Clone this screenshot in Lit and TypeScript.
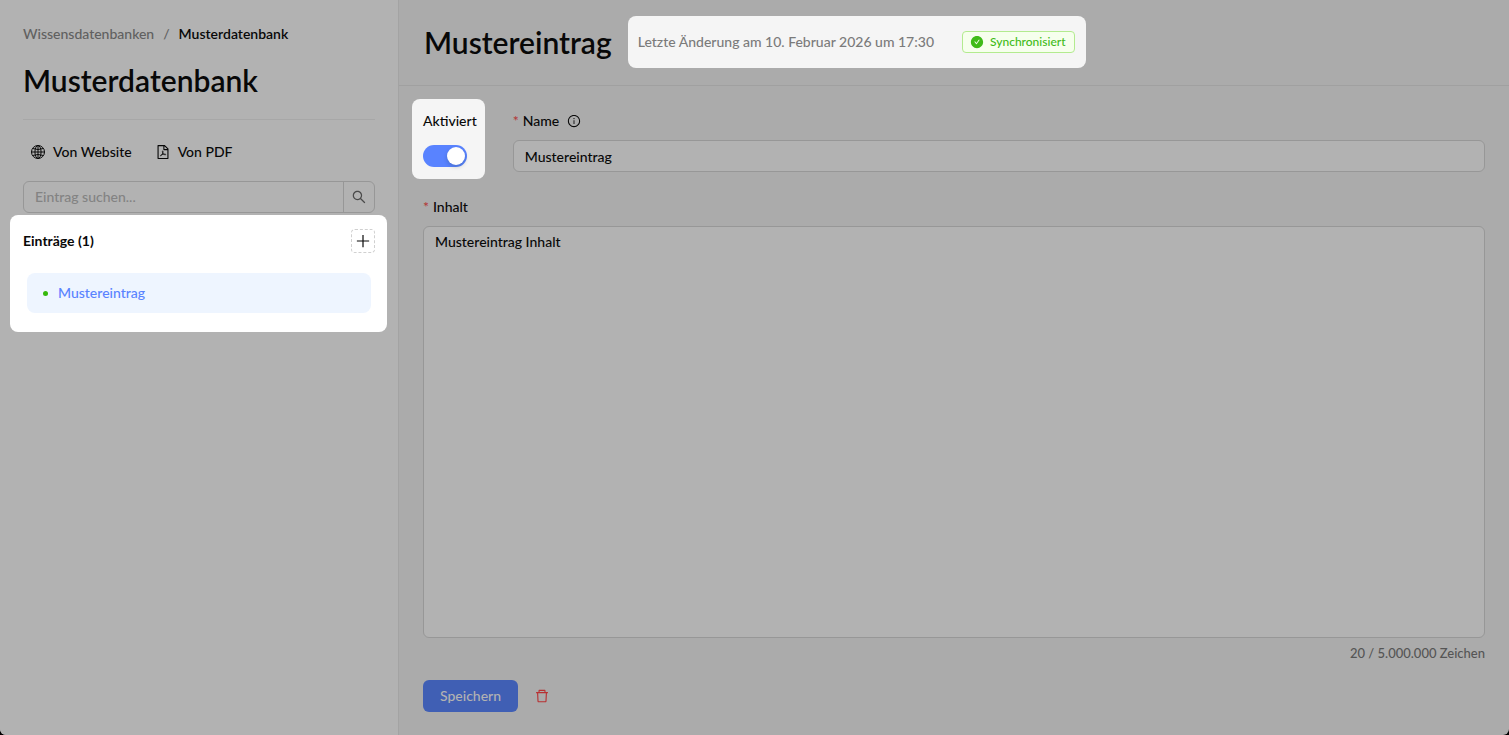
import { LitElement, html, css, svg } from "lit";
import { customElement, state } from "lit/decorators.js";

const icons = {
  globe: svg`<g fill="none" stroke="currentColor" stroke-width="64"><circle cx="512" cy="512" r="416"/><ellipse cx="512" cy="512" rx="196" ry="416"/><path d="M512 96v832M96 512h832M176 290q336 124 672 0M176 734q336-124 672 0"/></g>`,
  pdf: svg`<path d="M854.6 288.6L639.4 73.4c-6-6-14.1-9.4-22.6-9.4H192c-17.7 0-32 14.3-32 32v832c0 17.7 14.3 32 32 32h640c17.7 0 32-14.3 32-32V311.3c0-8.5-3.4-16.7-9.4-22.7zM790.2 326H602V137.8L790.2 326zm1.8 562H232V136h302v216a42 42 0 0042 42h216v494z"/><path fill="none" stroke="currentColor" stroke-width="50" d="M492 440c-26 10-22 84 8 140 32 62 92 110 160 112 34 0 40-34 4-42-92-20-230 20-302 72-26 20-14 46 12 34 62-30 134-164 142-258 2-34-6-62-24-58z"/>`,
  search: svg`<path d="M909.6 854.5L649.9 594.8C690.2 542.7 712 479 712 412c0-80.2-31.3-155.4-87.9-212.1-56.6-56.7-132-87.9-212.1-87.9s-155.5 31.3-212.1 87.9C143.2 256.5 112 331.8 112 412c0 80.1 31.3 155.5 87.9 212.1C256.5 680.8 331.8 712 412 712c67 0 130.6-21.8 182.7-62l259.7 259.6a8.2 8.2 0 0011.6 0l43.6-43.5a8.2 8.2 0 000-11.6zM570.4 570.4C528 612.7 471.8 636 412 636s-116-23.3-158.4-65.6C211.3 528 188 471.8 188 412s23.3-116.1 65.6-158.4C296 211.3 352.2 188 412 188s116.1 23.2 158.4 65.6S636 352.2 636 412s-23.3 116.1-65.6 158.4z"/>`,
  plus: svg`<path d="M474 120h76v354h354v76H550v354h-76V550H120v-76h354z"/>`,
  info: svg`<path d="M512 64C264.6 64 64 264.6 64 512s200.6 448 448 448 448-200.6 448-448S759.4 64 512 64zm0 820c-205.4 0-372-166.6-372-372s166.6-372 372-372 372 166.6 372 372-166.6 372-372 372z"/><path d="M464 336a48 48 0 1096 0 48 48 0 10-96 0zm72 112h-48c-4.4 0-8 3.6-8 8v272c0 4.4 3.6 8 8 8h48c4.4 0 8-3.6 8-8V456c0-4.4-3.6-8-8-8z"/>`,
  check: svg`<path d="M512 64C264.6 64 64 264.6 64 512s200.6 448 448 448 448-200.6 448-448S759.4 64 512 64zm193.5 301.7l-210.6 292a31.8 31.8 0 01-51.7 0L318.5 484.9c-3.8-5.3 0-12.7 6.5-12.7h46.9c10.2 0 19.9 4.9 25.9 13.3l71.2 98.8 157.2-218c6-8.3 15.6-13.3 25.9-13.3H699c6.5 0 10.3 7.4 6.5 12.7z"/>`,
  trash: svg`<path d="M360 184h-8c4.4 0 8-3.6 8-8v8h304v-8c0 4.4 3.6 8 8 8h-8v72h72v-80c0-35.3-28.7-64-64-64H352c-35.3 0-64 28.7-64 64v80h72v-72zm504 72H160c-17.7 0-32 14.3-32 32v32c0 4.4 3.6 8 8 8h60.4l24.7 523c1.6 34.1 29.8 61 63.9 61h454c34.2 0 62.3-26.8 63.9-61l24.7-523H888c4.4 0 8-3.6 8-8v-32c0-17.7-14.3-32-32-32zM731.3 840H292.7l-24.2-512h487l-24.2 512z"/>`,
};

const icon = (name: keyof typeof icons, size = "") =>
  html`<svg class="icon ${size}" viewBox="0 0 1024 1024" fill="currentColor" aria-hidden="true">${icons[name]}</svg>`;

@customElement("app-root")
export class AppRoot extends LitElement {
  @state() private content = "Mustereintrag Inhalt";
  @state() private entries = ["Mustereintrag"];

  static styles = css`
    :host {
      display: block;
      background: #000;
      font: 500 14px/22px Lato, "Liberation Sans", sans-serif;
      color: #080808;
    }
    * { box-sizing: border-box; }
    button, input, textarea { font: inherit; color: inherit; margin: 0; }
    button { cursor: pointer; }
    h1, h2, h3 { margin: 0; font-weight: 600; }
    a { text-decoration: none; }
    .icon { display: block; width: 16px; height: 16px; flex: none; }
    .icon.small { width: 14px; height: 14px; }

    .window {
      display: grid;
      grid-template-columns: 399px minmax(0, 1fr);
      min-height: 100vh;
      border-radius: 0 0 6px 6px;
      overflow: hidden;
      background: #ababab;
    }
    .sidebar {
      padding: 23px;
      background: #b2b2b2;
      border-right: 1px solid #a3a3a3;
    }
    .crumbs { display: flex; gap: 9px; }
    .crumbs a, .crumbs .slash { color: #606060; }
    .crumbs .current { color: #080808; font-weight: 600; }
    .title { font-size: 30px; line-height: 38px; white-space: nowrap; }
    .sidebar .title {
      margin-top: 16px;
      padding-bottom: 20px;
      border-bottom: 1px solid #a7a7a7;
    }
    .sources { display: flex; gap: 8px; margin-top: 16px; }
    .source {
      display: flex;
      align-items: center;
      gap: 7px;
      height: 32px;
      padding: 0 8px 0 7px;
      border: 0;
      background: none;
    }
    .search {
      display: flex;
      height: 32px;
      margin-top: 13px;
      border: 1px solid #979797;
      border-radius: 6px;
    }
    .search input {
      flex: 1;
      min-width: 0;
      padding: 0 11px;
      border: 0;
      background: none;
    }
    .search input::placeholder { color: #838383; opacity: 1; }
    .search button {
      display: grid;
      place-items: center;
      width: 31px;
      padding: 0;
      border: 0;
      border-left: 1px solid #979797;
      background: none;
      color: #4a4a4a;
    }
    .entries {
      margin: 2px -12px 0 -13px;
      padding: 14px 12px 19px 13px;
      border-radius: 8px;
      background: #fff;
    }
    .entries-head { display: flex; align-items: center; justify-content: space-between; }
    .entries h2 { font-size: 14px; font-weight: 700; }
    .add {
      display: grid;
      place-items: center;
      width: 24px;
      height: 24px;
      padding: 0;
      border: 1px dashed #d0d0d0;
      border-radius: 4px;
      background: #fff;
    }
    .entries ul { list-style: none; margin: 20px 4px 0; padding: 0; }
    .entry {
      display: flex;
      align-items: center;
      gap: 10px;
      height: 40px;
      padding: 0 16px;
      border-radius: 8px;
      background: #eef5ff;
      color: #5983ff;
    }
    .dot { width: 5px; height: 5px; border-radius: 50%; background: #35b90c; }

    .main { display: flex; flex-direction: column; }
    .header {
      display: flex;
      align-items: center;
      gap: 16px;
      padding: 16px 25px 17px;
      border-bottom: 1px solid #a0a0a0;
    }
    .meta {
      display: flex;
      align-items: center;
      gap: 28px;
      height: 52px;
      padding: 0 11px 0 10px;
      border-radius: 8px;
      background: #f5f5f5;
      color: #7b7b7b;
      white-space: nowrap;
    }
    .tag {
      display: flex;
      align-items: center;
      gap: 6px;
      padding: 0 8px 0 7px;
      border: 1px solid #b3eb8f;
      border-radius: 4px;
      background: #f6ffed;
      color: #3fbb18;
      font-size: 12px;
      line-height: 20px;
    }
    form {
      flex: 1;
      display: flex;
      flex-direction: column;
      padding: 13px 24px 23px;
    }
    .row { display: flex; gap: 28px; }
    .enabled {
      display: flex;
      flex-direction: column;
      gap: 13px;
      margin-left: -11px;
      padding: 11px 8px 12px 11px;
      border-radius: 8px;
      background: #f5f5f5;
    }
    .switch {
      appearance: none;
      display: flex;
      justify-content: flex-end;
      width: 44px;
      height: 22px;
      margin: 0;
      padding: 2px;
      border-radius: 11px;
      background: #5983ff;
      cursor: pointer;
    }
    .switch::before {
      content: "";
      width: 18px;
      height: 18px;
      border-radius: 50%;
      background: #fff;
      box-shadow: 0 2px 4px #00230b33;
    }
    .switch:not(:checked) { justify-content: flex-start; background: #bfbfbf; }
    .field { flex: 1; display: flex; flex-direction: column; gap: 8px; min-width: 0; }
    .row .field { padding-top: 11px; }
    .label { display: flex; align-items: center; gap: 8px; }
    .required::before { content: "*"; margin-right: 4px; color: #b23536; }
    .control {
      width: 100%;
      padding: 4px 11px;
      border: 1px solid #979797;
      border-radius: 6px;
      background: #b2b2b2;
    }
    input.control { height: 32px; }
    .content { margin-top: 17px; }
    textarea.control { display: block; flex: 1; min-height: 120px; resize: none; }
    .count { margin-top: 4px; text-align: right; font-size: 13px; color: #555; }
    .actions { display: flex; align-items: center; gap: 8px; margin-top: 16px; }
    .save {
      height: 32px;
      padding: 0 17px;
      border: 0;
      border-radius: 6px;
      background: #405fb4;
      color: #b2b2b2;
    }
    .delete {
      display: grid;
      place-items: center;
      width: 32px;
      height: 32px;
      padding: 0;
      border: 0;
      background: none;
      color: #b83032;
    }
  `;

  render() {
    return html`
      <div class="window">
        <aside class="sidebar">
          <nav class="crumbs" aria-label="Brotkrumen">
            <a href="#">Wissensdatenbanken</a>
            <span class="slash">/</span>
            <span class="current">Musterdatenbank</span>
          </nav>
          <h1 class="title">Musterdatenbank</h1>
          <div class="sources">
            <button class="source" type="button">${icon("globe")}Von Website</button>
            <button class="source" type="button">${icon("pdf")}Von PDF</button>
          </div>
          <div class="search" role="search">
            <input type="text" placeholder="Eintrag suchen..." aria-label="Eintrag suchen" />
            <button type="button" aria-label="Suchen">${icon("search")}</button>
          </div>
          <section class="entries">
            <div class="entries-head">
              <h2>Einträge (${this.entries.length})</h2>
              <button class="add" type="button" aria-label="Eintrag hinzufügen">${icon("plus")}</button>
            </div>
            <ul>
              ${this.entries.map((name) => html`<li><a class="entry" href="#"><span class="dot"></span>${name}</a></li>`)}
            </ul>
          </section>
        </aside>
        <main class="main">
          <header class="header">
            <h2 class="title">Mustereintrag</h2>
            <div class="meta">
              <span>Letzte Änderung am 10. Februar 2026 um 17:30</span>
              <span class="tag">${icon("check", "small")}Synchronisiert</span>
            </div>
          </header>
          <form @submit=${(e: Event) => e.preventDefault()}>
            <div class="row">
              <div class="enabled">
                <label for="enabled">Aktiviert</label>
                <input class="switch" id="enabled" type="checkbox" role="switch" checked />
              </div>
              <div class="field">
                <div class="label"><label class="required" for="name">Name</label>${icon("info", "small")}</div>
                <input class="control" id="name" type="text" value="Mustereintrag" />
              </div>
            </div>
            <div class="field content">
              <label class="required" for="content">Inhalt</label>
              <textarea
                class="control"
                id="content"
                .value=${this.content}
                @input=${(e: Event) => (this.content = (e.target as HTMLTextAreaElement).value)}
              ></textarea>
            </div>
            <div class="count">${this.content.length} / 5.000.000 Zeichen</div>
            <div class="actions">
              <button class="save" type="submit">Speichern</button>
              <button class="delete" type="button" aria-label="Löschen">${icon("trash")}</button>
            </div>
          </form>
        </main>
      </div>
    `;
  }
}
